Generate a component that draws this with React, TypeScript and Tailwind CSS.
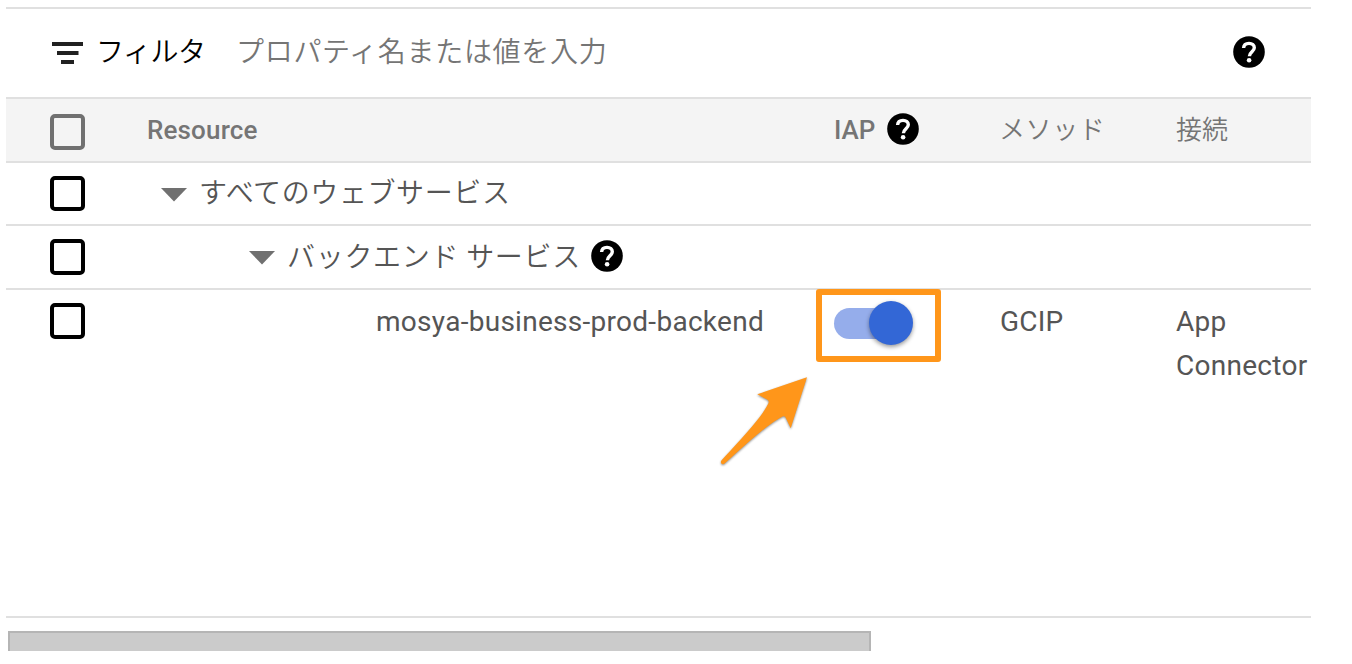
import { twMerge } from "tailwind-merge";

interface CheckboxProps {
  className?: string;
}

const Checkbox: React.FC<CheckboxProps> = ({ className }) => {
  return (
    <div
      role="checkbox"
      aria-checked="false"
      className={twMerge(
        "h-9 w-[35px] shrink-0 rounded-[5px] border-4 border-black",
        className
      )}
    />
  );
}

const HelpIcon: React.FC = () => {
  return (
    <svg width="32" height="32" viewBox="0 0 32 32" className="mb-0.5 shrink-0">
      <circle cx="16" cy="16" r="15.8" fill="black" />
      <path
        d="M10.600 12C10.800 9 13 7.400 16 7.400c3.200 0 5.300 1.700 5.300 4.400 0 3.600-4.900 4.300-4.900 8.400"
        fill="none"
        stroke="white"
        strokeWidth="3.400"
      />
      <circle cx="16.1" cy="24.2" r="2.3" fill="white" />
    </svg>
  );
}

const FilterIcon: React.FC = () => {
  return (
    <svg width="31" height="22" viewBox="0 0 31 22" className="shrink-0">
      <path d="M0 0h31v4H0zM5 9h21.500v4H5zM9 18h13v4H9z" fill="#212121" />
    </svg>
  );
}

const Caret: React.FC = () => {
  return (
    <svg width="26" height="14" viewBox="0 0 26 14" className="shrink-0">
      <path d="M0 0h26L13 13.500z" fill="#707070" />
    </svg>
  );
}

const Arrow: React.FC = () => {
  return (
    <svg
      width="100"
      height="100"
      viewBox="714 371 100 100"
      className="absolute left-[708px] top-[81px] drop-shadow-[0_1px_1px_rgba(0,0,0,0.45)]"
    >
      <path
        d="M807 377.300L757.300 394.300L767.500 399.800Q769.500 401 768.300 403.500C763 415 746 434 721.600 460.200Q720.400 461.800 721.200 463.200Q722.400 464.900 724.600 463.600C746 444 768 424 782.500 416.500Q784.800 415.500 785.600 417.500L790.700 428.300Z"
        fill="#ff961a"
      />
    </svg>
  );
}

const columns = "grid grid-cols-[97px_687px_166px_176px_1fr] pl-11";

const App: React.FC = () => {
  return (
    <div
      className="
        h-[664px]
        w-[1352px]
        overflow-hidden
        bg-white
        pl-1.5
        pt-[7px]
        font-['Roboto','Noto_Sans_CJK_JP',sans-serif]
        text-[28px]
        text-[#555]
      "
    >
      <div className="w-[1305px]">
        <div className="flex h-[90px] items-center border-t-2 border-[#e0e0e0] pl-[46px] pr-[46px]">
          <FilterIcon />
          <span className="ml-[13px] w-[140px] whitespace-nowrap pb-1.5 font-['Noto_Sans_CJK_JP',sans-serif] font-[350] leading-10 tracking-[-0.5px] text-black">
            フィルタ
          </span>
          <span className="flex-1 whitespace-nowrap pb-1.5 font-['Noto_Sans_CJK_JP',sans-serif] font-[350] leading-10 tracking-[0.7px] text-[#757575]">
            プロパティ名または値を入力
          </span>
          <HelpIcon />
        </div>

        <div className={`${columns} h-16 items-center border-t-2 border-[#e0e0e0] bg-[#f4f4f4] text-[26px] font-medium text-[#757575]`}>
          <Checkbox className="mt-1 border-[#707070]" />
          <span className="tracking-[0.15px]">Resource</span>
          <div className="flex items-center gap-3">
            <span>IAP</span>
            <HelpIcon />
          </div>
          <span className="-ml-px pb-1.5 font-['Noto_Sans_CJK_JP',sans-serif] font-[350] tracking-[0.6px]">メソッド</span>
          <span className="pb-1.5 font-['Noto_Sans_CJK_JP',sans-serif] font-[350]">接続</span>
        </div>

        <div className={`${columns} h-[63px] items-start border-t-2 border-[#e0e0e0] pt-[13px]`}>
          <Checkbox className="h-[35px]" />
          <div className="-mt-px flex items-center gap-3 pl-[14px]">
            <div className="pb-0.5">
              <Caret />
            </div>
            <span className="-mt-1 whitespace-nowrap pb-1.5 font-['Noto_Sans_CJK_JP',sans-serif] font-[350] leading-10 tracking-[0.6px]">
              すべてのウェブサービス
            </span>
          </div>
        </div>

        <div className={`${columns} h-16 items-center border-t-2 border-[#e0e0e0]`}>
          <Checkbox />
          <div className="flex items-center pl-[102px]">
            <div className="pt-0.5">
              <Caret />
            </div>
            <span className="ml-3 mr-[10px] whitespace-nowrap pb-1 font-['Noto_Sans_CJK_JP',sans-serif] font-[350] leading-10 tracking-[0.7px]">
              バックエンド サービス
            </span>
            <HelpIcon />
          </div>
        </div>

        <div className={`${columns} relative h-[330px] items-start border-y-2 border-[#e0e0e0] pt-[9px] leading-[44px]`}>
          <Checkbox className="mt-1" />
          <span className="pl-[229px] pt-px tracking-[0.28px]">mosya-business-prod-backend</span>
          <div role="switch" aria-checked="true" className="relative mt-[9px] h-[31px] w-[79px]">
            <div className="h-full w-[70px] rounded-full bg-[#95adeb]" />
            <div className="absolute -top-[7px] left-[35px] size-11 rounded-full bg-[#3367d6] shadow-[0_2px_4px_rgba(0,0,0,0.4)]" />
          </div>
          <span className="pt-px tracking-[0.2px]">GCIP</span>
          <span className="pt-px tracking-[0.28px]">App Connector</span>

          <div className="absolute -top-px left-[810px] h-[73px] w-[125px] rounded-[3px] border-[6px] border-[#ff961a]" />
          <Arrow />
        </div>
      </div>

      <div className="ml-0.5 mt-[13px] h-5 w-[863px] border-x-2 border-t-2 border-[#b5b5b5] bg-[#cbcbcb]" />
    </div>
  );
}

export default App;
